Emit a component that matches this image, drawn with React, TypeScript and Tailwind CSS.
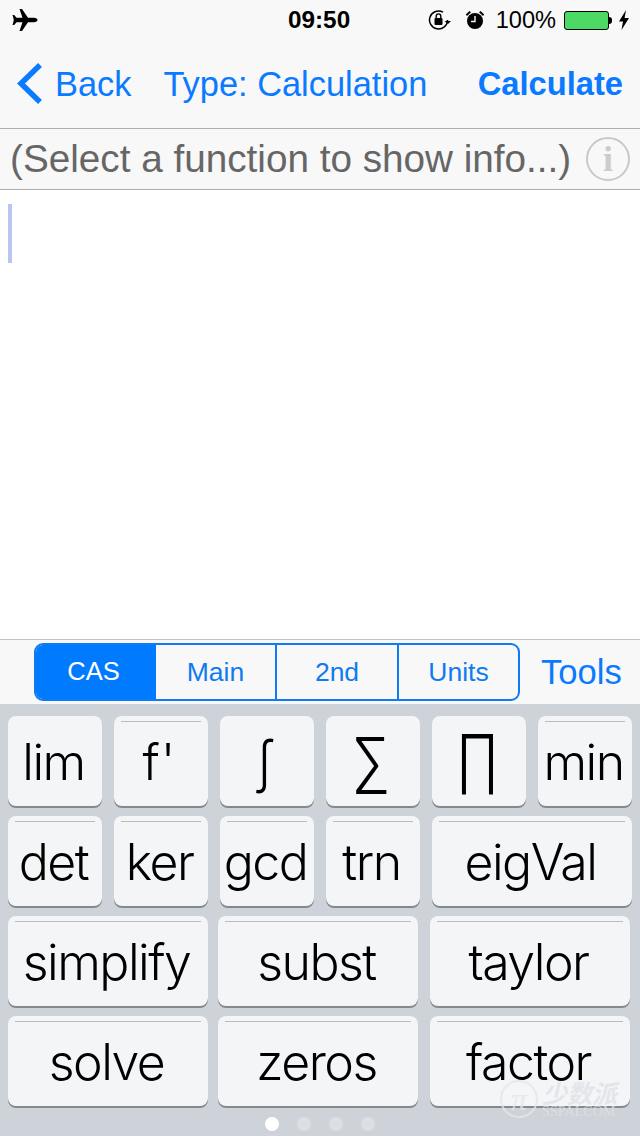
import React from 'react';

const sans = 'font-["Liberation_Sans",Arial,sans-serif]';

type KeyDef = { label: string; width: string; line?: boolean; extra?: string; labelClass?: string };

const rows: { gapClass: string; keys: KeyDef[] }[] = [
  {
    gapClass: 'gap-3',
    keys: [
      { label: 'lim', width: 'w-[94px]', line: false },
      { label: "f'", width: 'w-[94px]', labelClass: 'tracking-[0.02em]' },
      { label: '∫', width: 'w-[94px]', line: false, labelClass: 'scale-y-[1.1] -mt-[2px]' },
      { label: '∑', width: 'w-[94px]', line: false, labelClass: 'text-[55px] scale-y-[1.2] -mt-[2px]' },
      { label: '∏', width: 'w-[94px]', line: false, labelClass: 'text-[58px] scale-y-[1.27] -mt-[2px]' },
      { label: 'min', width: 'w-[94px]' },
    ],
  },
  {
    gapClass: 'gap-3',
    keys: [
      { label: 'det', width: 'w-[94px]' },
      { label: 'ker', width: 'w-[94px]' },
      { label: 'gcd', width: 'w-[94px]' },
      { label: 'trn', width: 'w-[94px]' },
      { label: 'eigVal', width: 'w-[200px]' },
    ],
  },
  {
    gapClass: 'gap-[10px]',
    keys: [
      { label: 'simplify', width: 'w-[200px]' },
      { label: 'subst', width: 'w-[200px]' },
      { label: 'taylor', width: 'w-[200px]', extra: 'ml-[2px]' },
    ],
  },
  {
    gapClass: 'gap-[10px]',
    keys: [
      { label: 'solve', width: 'w-[200px]' },
      { label: 'zeros', width: 'w-[200px]' },
      { label: 'factor', width: 'w-[200px]', extra: 'ml-[2px]' },
    ],
  },
];

const Key = ({ label, width, line = true, extra = '', labelClass = 'tracking-[-0.03em]' }: KeyDef) => (
  <div className={`relative flex h-[90px] items-center justify-center rounded-lg bg-[#f4f5f7] pt-[2px] pr-[3px] shadow-[0_2px_0_#85888d] ${width} ${extra}`}>
    {line && <div className="absolute inset-x-[7px] top-[5px] h-px bg-[#b9bbbe]" />}
    <span className={`font-['Inter',sans-serif] text-[50px] leading-none font-light text-black ${labelClass}`}>{label}</span>
  </div>
);

const StatusBar = () => (
  <div className="flex h-10 items-center justify-between pr-[10px] pl-[12px] text-black">
    <svg width="26" height="24" viewBox="0 0 26 24" fill="currentColor">
      <path d="M7.5 1 L10 1 L16 9.8 L22 9.8 C24 9.8 25.5 10.8 25.5 12 C25.5 13.2 24 14.2 22 14.2 L16 14.2 L10 23 L7.5 23 L10.5 14.2 L4.5 14.2 L2.2 17 L0.6 17 L1.8 12 L0.6 7 L2.2 7 L4.5 9.8 L10.5 9.8 Z" />
    </svg>
    <span className={`${sans} absolute left-[288px] text-[24.3px] leading-none font-bold`}>09:50</span>
    <div className="flex items-center">
      <svg width="24" height="22" viewBox="0 0 24 22" fill="none" stroke="currentColor" className="mr-[13px]">
        <path d="M19.5 11 A9 9 0 1 1 15 3.2" strokeWidth="1.5" />
        <path d="M16.5 12 L23 12 L20 15 Z" fill="currentColor" stroke="none" />
        <rect x="6.5" y="9" width="8" height="7" rx="1" fill="currentColor" stroke="none" />
        <path d="M8.2 9 V7.2 A2.3 2.3 0 0 1 12.8 7.2 V9" strokeWidth="1.4" />
      </svg>
      <svg width="20" height="20" viewBox="0 0 20 20" className="mr-[11px]">
        <circle cx="10" cy="11" r="8" fill="currentColor" />
        <path d="M10 6 V11.5 H6" stroke="#f8f8f8" strokeWidth="1.4" fill="none" />
        <path d="M0.8 4.5 L4.5 1 L6 2.2 L2 6 Z M19.2 4.5 L15.5 1 L14 2.2 L18 6 Z" fill="currentColor" />
      </svg>
      <span className={`${sans} mt-[2px] mr-[8px] text-[23.6px] leading-none`}>100%</span>
      <div className="flex items-center">
        <div className="h-[19px] w-[45px] rounded-[3px] border border-black bg-[#4cd964]" />
        <div className="h-[7px] w-[3px] rounded-r-sm bg-black" />
      </div>
      <svg width="12" height="20" viewBox="0 0 12 20" fill="currentColor" className="ml-[6px]">
        <path d="M8 0 L1 11.5 L5 11.5 L3.5 20 L11 8 L6.6 8 Z" />
      </svg>
    </div>
  </div>
);

const NavBar = () => (
  <div className={`${sans} flex h-[89px] items-center border-b border-[#aeaeae] text-[34.4px] leading-none text-[#0a7aff]`}>
    <svg width="28" height="44" viewBox="0 0 28 44" fill="none" stroke="currentColor" strokeWidth="5.5" className="ml-[16px] shrink-0">
      <path d="M24 3 L5 21.5 L24 40" />
    </svg>
    <span className="ml-[11px]">Back</span>
    <span className="ml-[32px]">Type: Calculation</span>
    <span className="mr-[17px] ml-auto text-[32.7px] font-bold">Calculate</span>
  </div>
);

const InfoBar = () => (
  <div className={`${sans} flex h-[61px] items-center justify-between border-b border-[#aeaeae] px-[10px] text-[#666666]`}>
    <span className="text-[38.7px] leading-none whitespace-nowrap">(Select a function to show info...)</span>
    <div className="flex h-[44px] w-[44px] shrink-0 items-center justify-center rounded-full border-2 border-[#c8c8c8] font-['Liberation_Serif',serif] text-[36px] leading-none font-bold text-[#cccccc]">
      i
    </div>
  </div>
);

const Segments = () => (
  <div className={`${sans} ml-[34px] flex h-[58px] w-[486px] overflow-hidden rounded-[9px] border-2 border-[#0f7bf2] text-[26.5px] leading-none text-[#0f7bf2]`}>
    <div className="flex w-[120px] items-center justify-center bg-[#007aff] pr-[5px] text-[25.5px] text-white">CAS</div>
    <div className="flex w-[121px] items-center justify-center border-r-2 border-[#0f7bf2]">Main</div>
    <div className="flex w-[122px] items-center justify-center border-r-2 border-[#0f7bf2]">2nd</div>
    <div className="flex flex-1 items-center justify-center">Units</div>
  </div>
);

const Watermark = () => (
  <div className="absolute top-[1080px] left-[500px] flex items-center opacity-80">
    <div className="flex h-[38px] w-[38px] items-center justify-center rounded-full border-2 border-[#e4e7ec] font-['Liberation_Serif',serif] text-[32px] leading-none text-[#e4e7ec] italic">
      π
    </div>
    <div className="ml-[4px] flex flex-col items-start">
      <span className="font-['Noto_Sans_CJK_SC',sans-serif] text-[25px] leading-[25px] font-bold text-[#dfe2e7] italic">少数派</span>
      <span className="font-['Liberation_Serif',serif] text-[14px] leading-[13px] tracking-[0.01em] text-[#dfe2e7]">SSPAI.COM</span>
    </div>
  </div>
);

export default function App() {
  return (
    <div className="relative h-[1136px] w-[640px] overflow-hidden bg-[#f8f8f8]">
      <StatusBar />
      <NavBar />
      <InfoBar />
      <div className="relative h-[449px] bg-white">
        <div className="absolute top-[14px] left-[8px] h-[59px] w-1 bg-[#b9c6f2]" />
      </div>
      <div className="flex h-[65px] items-center border-t border-[#c4c4c4]">
        <Segments />
        <span className={`${sans} ml-[21px] text-[34.6px] leading-none text-[#0a7aff]`}>Tools</span>
      </div>
      <div className="flex h-[432px] flex-col gap-[10px] bg-[#ced3da] px-2 pt-3">
        {rows.map((row, i) => (
          <div key={i} className={`flex ${row.gapClass}`}>
            {row.keys.map((k) => (
              <Key key={k.label} {...k} />
            ))}
          </div>
        ))}
        <div className="mt-[1px] flex justify-center gap-[18px]">
          <div className="h-[14px] w-[14px] rounded-full bg-white" />
          <div className="h-[14px] w-[14px] rounded-full bg-[#dcdfe4]" />
          <div className="h-[14px] w-[14px] rounded-full bg-[#dcdfe4]" />
          <div className="h-[14px] w-[14px] rounded-full bg-[#dcdfe4]" />
        </div>
      </div>
      <Watermark />
    </div>
  );
}
